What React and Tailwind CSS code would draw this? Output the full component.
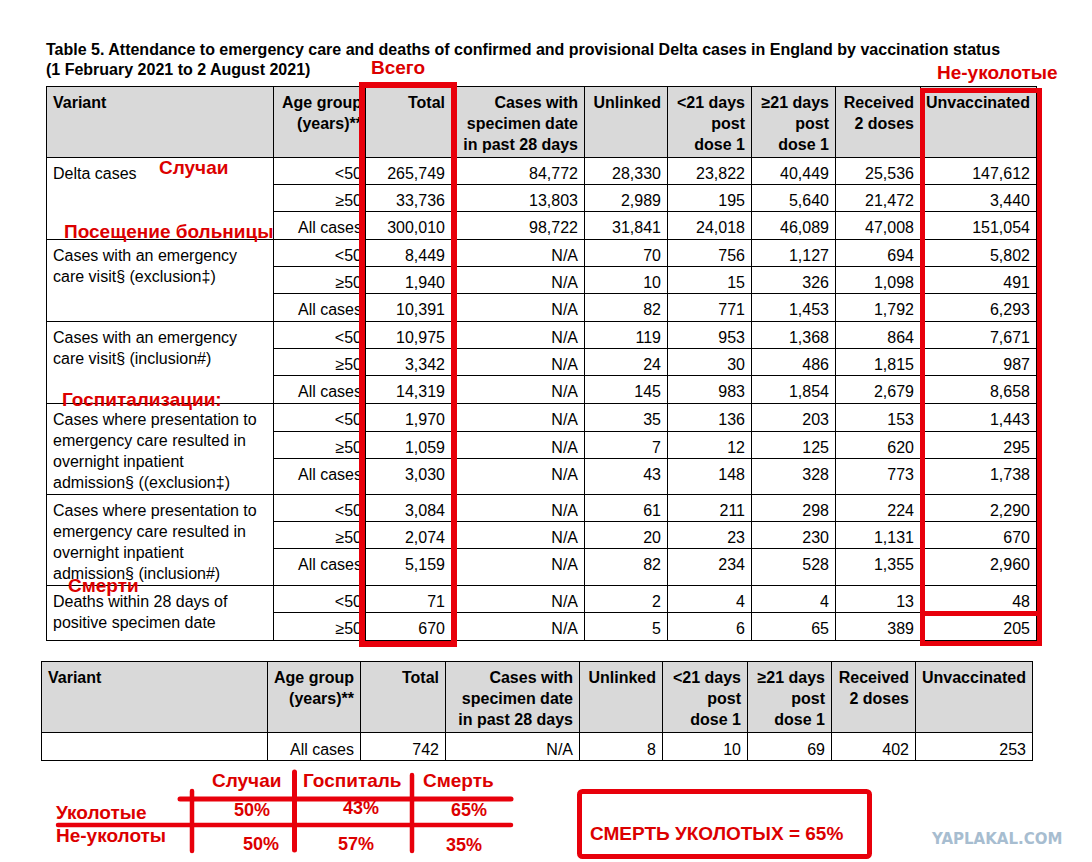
import React from 'react';

const groups = [
  {
    label: ['Delta cases'],
    hs: ['h-[27px]', 'h-[27px]', 'h-[28px]'],
    rows: [
      ['<50', '265,749', '84,772', '28,330', '23,822', '40,449', '25,536', '147,612'],
      ['≥50', '33,736', '13,803', '2,989', '195', '5,640', '21,472', '3,440'],
      ['All cases', '300,010', '98,722', '31,841', '24,018', '46,089', '47,008', '151,054'],
    ],
  },
  {
    label: ['Cases with an emergency', 'care visit§ (exclusion‡)'],
    hs: ['h-[27px]', 'h-[27px]', 'h-[28px]'],
    rows: [
      ['<50', '8,449', 'N/A', '70', '756', '1,127', '694', '5,802'],
      ['≥50', '1,940', 'N/A', '10', '15', '326', '1,098', '491'],
      ['All cases', '10,391', 'N/A', '82', '771', '1,453', '1,792', '6,293'],
    ],
  },
  {
    label: ['Cases with an emergency', 'care visit§ (inclusion#)'],
    hs: ['h-[27px]', 'h-[27px]', 'h-[28px]'],
    rows: [
      ['<50', '10,975', 'N/A', '119', '953', '1,368', '864', '7,671'],
      ['≥50', '3,342', 'N/A', '24', '30', '486', '1,815', '987'],
      ['All cases', '14,319', 'N/A', '145', '983', '1,854', '2,679', '8,658'],
    ],
  },
  {
    label: ['Cases where presentation to', 'emergency care resulted in', 'overnight inpatient', 'admission§ ((exclusion‡)'],
    hs: ['h-[28px]', 'h-[27px]', 'h-[36px]'],
    rows: [
      ['<50', '1,970', 'N/A', '35', '136', '203', '153', '1,443'],
      ['≥50', '1,059', 'N/A', '7', '12', '125', '620', '295'],
      ['All cases', '3,030', 'N/A', '43', '148', '328', '773', '1,738'],
    ],
  },
  {
    label: ['Cases where presentation to', 'emergency care resulted in', 'overnight inpatient', 'admission§ (inclusion#)'],
    hs: ['h-[27px]', 'h-[27px]', 'h-[37px]'],
    rows: [
      ['<50', '3,084', 'N/A', '61', '211', '298', '224', '2,290'],
      ['≥50', '2,074', 'N/A', '20', '23', '230', '1,131', '670'],
      ['All cases', '5,159', 'N/A', '82', '234', '528', '1,355', '2,960'],
    ],
  },
  {
    label: ['Deaths within 28 days of', 'positive specimen date'],
    hs: ['h-[27px]', 'h-[28px]'],
    rows: [
      ['<50', '71', 'N/A', '2', '4', '4', '13', '48'],
      ['≥50', '670', 'N/A', '5', '6', '65', '389', '205'],
    ],
  },
];

const headers = [
  ['Total'],
  ['Cases with', 'specimen date', 'in past 28 days'],
  ['Unlinked'],
  ['<21 days', 'post', 'dose 1'],
  ['≥21 days', 'post', 'dose 1'],
  ['Received', '2 doses'],
  ['Unvaccinated'],
];

function Lines({ lines }) {
  return lines.map((l, i) => (
    <React.Fragment key={i}>
      {i > 0 && <br />}
      {l}
    </React.Fragment>
  ));
}

function HeaderRow({ agePad }) {
  return (
    <tr className="h-[71px] bg-[#d9d9d9]">
      <th className="border border-black align-top text-left font-bold pl-[6px] pt-[5px]">Variant</th>
      <th className={`border border-black align-top text-right font-bold pt-[5px] ${agePad}`}>
        Age group<br />(years)**
      </th>
      {headers.map((h, i) => (
        <th key={i} className="border border-black align-top text-right font-bold pr-[6px] pt-[5px]">
          <Lines lines={h} />
        </th>
      ))}
    </tr>
  );
}

function MainTable() {
  return (
    <table className="mt-[6px] border-collapse table-fixed w-[990px] text-[16px] leading-[21px]">
      <colgroup>
        <col className="w-[227px]" />
        <col className="w-[92px]" />
        <col className="w-[86px]" />
        <col className="w-[133px]" />
        <col className="w-[83px]" />
        <col className="w-[84px]" />
        <col className="w-[84px]" />
        <col className="w-[85px]" />
        <col className="w-[116px]" />
      </colgroup>
      <thead>
        <HeaderRow agePad="pr-[3px]" />
      </thead>
      <tbody>
        {groups.map((g, gi) =>
          g.rows.map((r, ri) => (
            <tr key={gi + '-' + ri} className={g.hs[ri]}>
              {ri === 0 && (
                <td rowSpan={g.rows.length} className="border border-black align-top text-left whitespace-nowrap pl-[6px] pt-[5px]">
                  <Lines lines={g.label} />
                </td>
              )}
              <td className="border border-black align-top text-right whitespace-nowrap pr-[3px] pt-[5px]">{r[0]}</td>
              {r.slice(1).map((v, vi) => (
                <td key={vi} className="border border-black align-top text-right whitespace-nowrap pr-[6px] pt-[5px]">
                  {v}
                </td>
              ))}
            </tr>
          ))
        )}
      </tbody>
    </table>
  );
}

function BottomTable() {
  const vals = ['All cases', '742', 'N/A', '8', '10', '69', '402', '253'];
  return (
    <table className="ml-[41px] mt-[20px] border-collapse table-fixed w-[991px] text-[16px] leading-[21px]">
      <colgroup>
        <col className="w-[226px]" />
        <col className="w-[93px]" />
        <col className="w-[85px]" />
        <col className="w-[134px]" />
        <col className="w-[83px]" />
        <col className="w-[85px]" />
        <col className="w-[84px]" />
        <col className="w-[84px]" />
        <col className="w-[117px]" />
      </colgroup>
      <thead>
        <HeaderRow agePad="pr-[6px]" />
      </thead>
      <tbody>
        <tr className="h-[28px]">
          <td className="border border-black"></td>
          {vals.map((v, i) => (
            <td key={i} className="border border-black align-top text-right whitespace-nowrap pr-[6px] pt-[6px]">
              {v}
            </td>
          ))}
        </tr>
      </tbody>
    </table>
  );
}

const red = 'absolute whitespace-nowrap font-bold text-[#dc0000] leading-[19px]';

export default function App() {
  return (
    <div className="relative w-[1092px] h-[862px] overflow-hidden bg-white text-black font-['Liberation_Sans',Arial,sans-serif]">
      <div className="pl-[46px] pt-[40px]">
        <h1 className="text-[16px] leading-[20px] font-bold whitespace-nowrap">
          Table 5. Attendance to emergency care and deaths of confirmed and provisional Delta cases in England by vaccination status
          <br />
          (1 February 2021 to 2 August 2021)
        </h1>
        <MainTable />
      </div>
      <BottomTable />

      {/* annotation overlay */}
      <svg className="absolute left-0 top-0 pointer-events-none" width="1092" height="862" viewBox="0 0 1092 862">
        <g fill="none" stroke="#e8000b">
          <rect x="362" y="85" width="92" height="559" strokeWidth="6" />
          <rect x="922.5" y="90.5" width="117" height="553" strokeWidth="5" />
          <line x1="920" y1="613.5" x2="1042" y2="613.5" strokeWidth="5" />
          <rect x="579.5" y="791.5" width="290" height="65" rx="3" strokeWidth="5" />
        </g>
        <g stroke="#e8000b" strokeLinecap="round">
          <line x1="180" y1="799" x2="511" y2="799" strokeWidth="5" />
          <line x1="58" y1="825" x2="511" y2="825" strokeWidth="4.5" />
          <line x1="192" y1="791" x2="192" y2="851" strokeWidth="4.5" />
          <line x1="294.5" y1="772" x2="294.5" y2="850" strokeWidth="5" />
          <line x1="412" y1="775" x2="412" y2="851" strokeWidth="4.5" />
        </g>
      </svg>

      <span className={`${red} text-[19px] left-[371px] top-[58px]`}>Всего</span>
      <span className={`${red} text-[19px] left-[937px] top-[63px]`}>Не-уколотые</span>
      <span className={`${red} text-[19px] left-[159px] top-[158px]`}>Случаи</span>
      <span className={`${red} text-[19px] left-[64px] top-[222px]`}>Посещение больницы</span>
      <span className={`${red} text-[19px] left-[62px] top-[390px]`}>Госпитализации:</span>
      <span className={`${red} text-[19px] left-[68px] top-[576px]`}>Смерти</span>

      <span className={`${red} text-[19px] left-[212px] top-[771px]`}>Случаи</span>
      <span className={`${red} text-[19px] left-[303px] top-[771px]`}>Госпиталь</span>
      <span className={`${red} text-[19px] left-[423px] top-[771px]`}>Смерть</span>
      <span className={`${red} text-[19px] left-[56px] top-[803px]`}>Уколотые</span>
      <span className={`${red} text-[19px] left-[56px] top-[826px]`}>Не-уколоты</span>

      <span className={`${red} text-[18px] left-[234px] top-[801px]`}>50%</span>
      <span className={`${red} text-[18px] left-[343px] top-[799px]`}>43%</span>
      <span className={`${red} text-[18px] left-[451px] top-[801px]`}>65%</span>
      <span className={`${red} text-[18px] left-[243px] top-[835px]`}>50%</span>
      <span className={`${red} text-[18px] left-[338px] top-[835px]`}>57%</span>
      <span className={`${red} text-[18px] left-[446px] top-[836px]`}>35%</span>

      <span className={`${red} text-[19px] left-[590px] top-[824px]`}>СМЕРТЬ УКОЛОТЫХ = 65%</span>
      <span className="absolute left-[932px] top-[832px] whitespace-nowrap font-bold text-[15px] leading-[15px] text-[#a7bdd0] font-['DejaVu_Sans',sans-serif]">
        YAPLAKAL.COM
      </span>
    </div>
  );
}
